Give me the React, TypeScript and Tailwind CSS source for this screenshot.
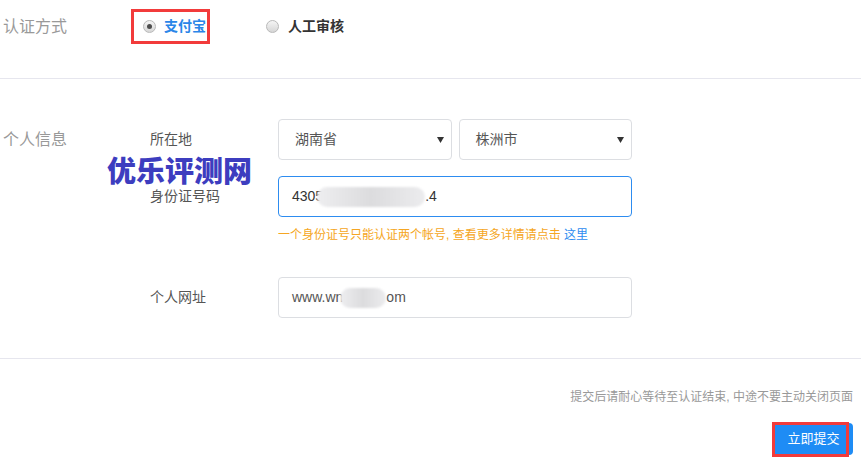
import React from "react";

const font = "font-['Liberation_Sans','Noto_Sans_CJK_SC',sans-serif]";

function Radio({ checked }: { checked?: boolean }) {
    return (
        <span className="flex h-[13px] w-[13px] shrink-0 items-center justify-center rounded-full border border-[#b9b9b9] bg-linear-to-b from-[#f5f5f5] to-[#d6d6d6]">
            {checked && <span className="h-[5px] w-[5px] rounded-full bg-[#4d4d4d]" />}
        </span>
    );
}

function Caret() {
    return (
        <svg width="7" height="6" viewBox="0 0 7 6" className="shrink-0">
            <path d="M0 0h7L3.5 6z" fill="#333" />
        </svg>
    );
}

function Select({ value }: { value: string }) {
    return (
        <div className="flex h-[41px] flex-1 items-center justify-between rounded-[4px] border border-[#dcdee2] pl-[16px] pr-[7px] text-[14px] text-[#555]">
            <span>{value}</span>
            <Caret />
        </div>
    );
}

// blurred (privacy) patch inside the inputs
function Smudge({ w }: { w: number }) {
    return (
        <span
            className="inline-block h-[20px] rounded-full bg-linear-to-r from-[#eeeef0] via-[#dcdcde] to-[#ececee] align-middle blur-[1px]"
            style={{ width: w }}
        />
    );
}

export default function App() {
    return (
        <div className={`${font} w-full bg-white`}>
            {/* auth method */}
            <div className="flex h-[79px] items-start border-b border-[#e6e6ee] pt-[9px]">
                <div className="w-[131px] pl-[3px] text-[16px] leading-[35px] text-[#999]">认证方式</div>
                <div className="flex h-[35px] w-[79px] items-center border-[3px] border-[#f23b3b] pl-[9px]">
                    <Radio checked />
                    <span className="ml-[8px] whitespace-nowrap text-[14px] font-bold text-[#2a86e8]">支付宝</span>
                </div>
                <div className="ml-[56px] flex h-[35px] items-center">
                    <Radio />
                    <span className="ml-[9px] text-[14px] font-bold text-[#333]">人工审核</span>
                </div>
            </div>

            {/* personal info */}
            <div className="relative flex border-b border-[#e6e6ee] pb-[40px] pt-[40px]">
                <div className="w-[150px] pl-[3px] text-[16px] leading-[41px] text-[#999]">个人信息</div>
                <div className="flex flex-col">
                    <div className="flex">
                        <div className="w-[128px] text-[14px] leading-[41px] text-[#555]">所在地</div>
                        <div className="flex w-[354px] gap-[7px]">
                            <Select value="湖南省" />
                            <Select value="株洲市" />
                        </div>
                    </div>
                    <div className="mt-[16px] flex">
                        <div className="w-[128px] text-[14px] leading-[41px] text-[#555]">身份证号码</div>
                        <div className="flex h-[41px] w-[354px] items-center rounded-[4px] border border-[#2d8cf0] pl-[13px] text-[14px] text-[#333]">
                            <span>4305</span>
                            <span className="-ml-[6px]"><Smudge w={108} /></span>
                            <span>.4</span>
                        </div>
                    </div>
                    <div className="ml-[128px] mt-[9px] text-[12px] leading-[18px] text-[#f5a623]">
                        一个身份证号只能认证两个帐号, 查看更多详情请点击 <span className="text-[#2d8cf0]">这里</span>
                    </div>
                    <div className="mt-[33px] flex">
                        <div className="w-[128px] text-[14px] leading-[41px] text-[#555]">个人网址</div>
                        <div className="flex h-[41px] w-[354px] items-center rounded-[4px] border border-[#dcdee2] pl-[13px] text-[14px] text-[#555]">
                            <span>www.wn</span>
                            <span className="-ml-[3px]"><Smudge w={46} /></span>
                            <span>om</span>
                        </div>
                    </div>
                </div>

                {/* watermark */}
                <div className="absolute left-[107px] top-[79px] text-[29px] font-black leading-none text-[#3d3dbf]">优乐评测网</div>
            </div>

            {/* submit */}
            <div className="flex flex-col items-end pb-[10px] pr-[8px] pt-[29px]">
                <div className="text-[12px] leading-[18px] text-[#999]">提交后请耐心等待至认证结束, 中途不要主动关闭页面</div>
                <button className="relative mt-[17px] h-[32px] w-[79px] rounded-[4px] bg-[#1e8cf5] text-[13px] text-white">
                    立即提交
                    <span className="pointer-events-none absolute -bottom-[2px] -left-[2px] -top-[1px] right-[4px] border-[3px] border-[#f23b3b]" />
                </button>
            </div>
        </div>
    );
}
